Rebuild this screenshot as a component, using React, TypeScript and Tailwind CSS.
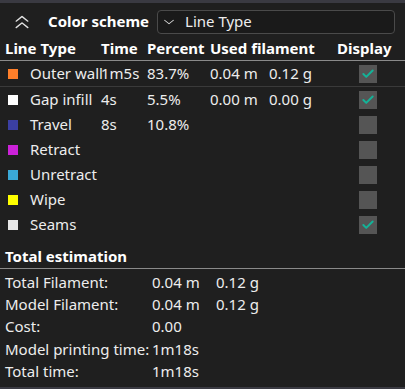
import { Check, ChevronDown, ChevronsUp } from 'lucide-react'

interface LineRow {
  name: string
  color: string
  time?: string
  percent?: string
  meters?: string
  grams?: string
  shown: boolean
}

const rows: LineRow[] = [
  { name: 'Outer wall', color: 'bg-[#ff7f2a]', time: '1m5s', percent: '83.7%', meters: '0.04 m', grams: '0.12 g', shown: true },
  { name: 'Gap infill', color: 'bg-[#ffffff]', time: '4s', percent: '5.5%', meters: '0.00 m', grams: '0.00 g', shown: true },
  { name: 'Travel', color: 'bg-[#3b3fa3]', time: '8s', percent: '10.8%', shown: false },
  { name: 'Retract', color: 'bg-[#cc22d9]', shown: false },
  { name: 'Unretract', color: 'bg-[#3aa9d8]', shown: false },
  { name: 'Wipe', color: 'bg-[#ffff00]', shown: false },
  { name: 'Seams', color: 'bg-[#e6e6e6]', shown: true },
]

const totals = [
  { label: 'Total Filament:', a: '0.04 m', b: '0.12 g' },
  { label: 'Model Filament:', a: '0.04 m', b: '0.12 g' },
  { label: 'Cost:', a: '0.00' },
  { label: 'Model printing time:', a: '1m18s' },
  { label: 'Total time:', a: '1m18s' },
]

export default function App() {
  return (
    <div className="w-[405px] h-[389px] bg-[#3a3a42] pt-[3px] pb-[2px] font-['Noto_Sans',sans-serif] text-[15px] text-[#ededed] overflow-hidden">
      <div className="h-full bg-[#1f1f1f]">
        {/* Header */}
        <div className="flex items-center h-[33px] pt-[4px]">
          <ChevronsUp className="ml-[11px] w-[22px] h-[22px] text-[#e0e0e0] scale-x-125" strokeWidth={1.4} />
          <span className="ml-[15px] font-bold text-white whitespace-nowrap">Color scheme</span>
          <div className="ml-[8px] flex items-center h-[24px] w-[238px] rounded-[4px] border border-[#4a4a4a] bg-[#1a1a1a]">
            <ChevronDown className="ml-[4px] w-[14px] h-[14px] text-[#d8d8d8] scale-x-125" strokeWidth={1.4} />
            <span className="ml-[9px] leading-none">Line Type</span>
          </div>
        </div>

        {/* Column headers */}
        <div className="flex items-center h-[25px] pt-[1px] font-bold text-white whitespace-nowrap border-b border-[#8a8a8a]">
          <span className="pl-[5px] w-[101px]">Line Type</span>
          <span className="w-[46px]">Time</span>
          <span className="w-[63px]">Percent</span>
          <span className="w-[127px]">Used filament</span>
          <span>Display</span>
        </div>

        {/* Line rows */}
        <div>
          {rows.map((r, i) => (
            <div
              key={r.name}
              className={`flex items-center h-[25px] whitespace-nowrap ${i === 0 ? 'border-b border-[#3a3a3a] h-[26px]' : ''}`}
            >
              <span className={`ml-[8px] w-[10px] h-[10px] ${r.color}`} />
              <span className="ml-[12px] w-[71px]">{r.name}</span>
              <span className="w-[46px]">{r.time}</span>
              <span className="w-[63px]">{r.percent}</span>
              <span className="w-[59px]">{r.meters}</span>
              <span className="w-[90px]">{r.grams}</span>
              <span className="w-[18px] h-[18px] bg-[#555555] flex items-center justify-center">
                {r.shown && <Check className="w-[14px] h-[14px] text-[#13b398]" strokeWidth={3.4} />}
              </span>
            </div>
          ))}
        </div>

        {/* Total estimation */}
        <div className="mt-[8px] h-[24px] pl-[5px] flex items-center font-bold text-white border-b border-[#8a8a8a]">
          Total estimation
        </div>
        <div className="pt-[2px]">
          {totals.map((t) => (
            <div key={t.label} className="flex items-center h-[22.25px] whitespace-nowrap">
              <span className="pl-[5px] w-[152px]">{t.label}</span>
              <span className="w-[64px]">{t.a}</span>
              <span>{t.b}</span>
            </div>
          ))}
        </div>
      </div>
    </div>
  )
}
